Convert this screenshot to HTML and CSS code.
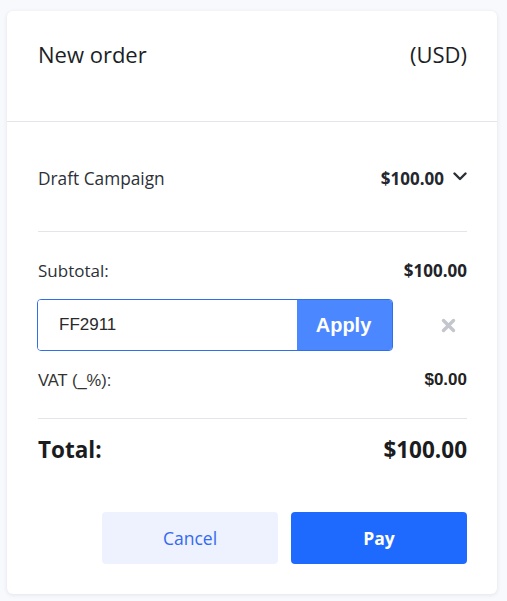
FILE: index.html
```html
<!DOCTYPE html>
<html>
<head>
<meta charset="utf-8">
<link rel="stylesheet" href="styles.css">
</head>
<body>
<div class="card">
  <div class="card-header">
    <span class="title">New order</span>
    <span class="currency">(USD)</span>
  </div>
  <div class="card-body">
    <div class="item-row">
      <span class="item-name">Draft Campaign</span>
      <span class="item-price">$100.00
        <svg class="chevron" width="14" height="9" viewBox="0 0 14 9"><path d="M1.5 1.5 L7 7 L12.5 1.5" fill="none" stroke="#2b2f36" stroke-width="2.4" stroke-linecap="round" stroke-linejoin="round"/></svg>
      </span>
    </div>
    <div class="subtotal-row">
      <span class="label">Subtotal:</span>
      <span class="amount">$100.00</span>
    </div>
    <div class="coupon-row">
      <div class="coupon-group">
        <input class="coupon-input" type="text" value="FF2911">
        <button class="apply-btn">Apply</button>
      </div>
      <svg class="clear-icon" width="15" height="15" viewBox="0 0 15 15"><path d="M2.5 2.5 L12.5 12.5 M12.5 2.5 L2.5 12.5" stroke="#c3c6cc" stroke-width="3.4" stroke-linecap="round"/></svg>
    </div>
    <div class="vat-row">
      <span class="vat-label">VAT (_%):</span>
      <span class="vat-amount">$0.00</span>
    </div>
    <div class="total-row">
      <span class="total-label">Total:</span>
      <span class="total-amount">$100.00</span>
    </div>
    <div class="actions">
      <button class="btn btn-cancel">Cancel</button>
      <button class="btn btn-pay">Pay</button>
    </div>
  </div>
</div>
</body>
</html>
```

FILE: styles.css
```css
* { box-sizing: border-box; }
html, body { margin: 0; padding: 0; }
body {
  background: #f8f9fc;
  font-family: "Open Sans", "Noto Sans", sans-serif;
  color: #1f2329;
  width: 507px;
  height: 601px;
  overflow: hidden;
}
.card {
  margin: 11px 0 0 7px;
  width: 490px;
  height: 583px;
  background: #ffffff;
  border-radius: 6px;
  box-shadow: 0 1px 4px rgba(30, 40, 80, 0.10);
}
.card-header {
  display: flex;
  justify-content: space-between;
  align-items: center;
  padding: 28px 30px 52px 31px;
  border-bottom: 1px solid #e3e5e9;
  font-size: 22px;
  line-height: 30px;
  color: #1c1f26;
}
.card-body {
  padding: 0 30px 30px 31px;
}
.item-row {
  display: flex;
  justify-content: space-between;
  align-items: center;
  padding: 45px 0 40px;
  line-height: 24px;
  border-bottom: 1px solid #e3e5e9;
}
.item-name {
  font-size: 17.3px;
  color: #2d3038;
}
.item-price {
  display: flex;
  align-items: center;
  font-size: 17px;
  font-weight: 700;
  color: #24272e;
}
.chevron {
  margin-left: 9px;
  margin-top: -5px;
}
.subtotal-row {
  display: flex;
  justify-content: space-between;
  align-items: center;
  padding-top: 28px;
  line-height: 22px;
  font-size: 17px;
}
.subtotal-row .label { color: #2d3038; }
.subtotal-row .amount { font-weight: 700; color: #1f2329; }
.coupon-row {
  display: flex;
  justify-content: space-between;
  align-items: center;
  margin-top: 17px;
}
.coupon-group {
  display: flex;
  width: 356px;
  height: 52px;
  margin-left: -1px;
  border: 1px solid #2f6fea;
  border-radius: 4px;
  overflow: hidden;
}
.coupon-input {
  flex: 1;
  min-width: 0;
  border: none;
  outline: none;
  padding: 0 0 0 21px;
  font-family: "Liberation Sans", Arial, sans-serif;
  font-size: 17px;
  color: #2a2a2a;
  background: #fff;
}
.apply-btn {
  width: 95px;
  border: none;
  background: #4b87ff;
  color: #fff;
  font-family: "Liberation Sans", Arial, sans-serif;
  font-weight: 700;
  font-size: 20px;
  padding: 0 2px 0 0;
}
.clear-icon {
  margin-right: 11px;
}
.vat-row {
  display: flex;
  justify-content: space-between;
  align-items: center;
  margin-top: 18px;
  padding-bottom: 27px;
  line-height: 22px;
  border-bottom: 1px solid #e3e5e9;
  font-family: "Liberation Sans", Arial, sans-serif;
  font-size: 16.5px;
}
.vat-label { color: #333; }
.vat-amount { font-weight: 700; color: #222; font-size: 17px; }
.total-row {
  display: flex;
  justify-content: space-between;
  align-items: center;
  padding-top: 16px;
  line-height: 30px;
  font-size: 22.5px;
  font-weight: 700;
  color: #1a1c20;
}
.actions {
  display: flex;
  justify-content: flex-end;
  gap: 13px;
  margin-top: 47px;
}
.btn {
  width: 176px;
  height: 52px;
  border: none;
  border-radius: 4px;
  font-family: "Open Sans", "Noto Sans", sans-serif;
  font-size: 17.5px;
  padding: 0;
}
.btn-cancel {
  background: #edf2fe;
  color: #3469f2;
  font-weight: 500;
}
.btn-pay {
  background: #1f6afe;
  color: #fff;
  font-weight: 700;
}
```
